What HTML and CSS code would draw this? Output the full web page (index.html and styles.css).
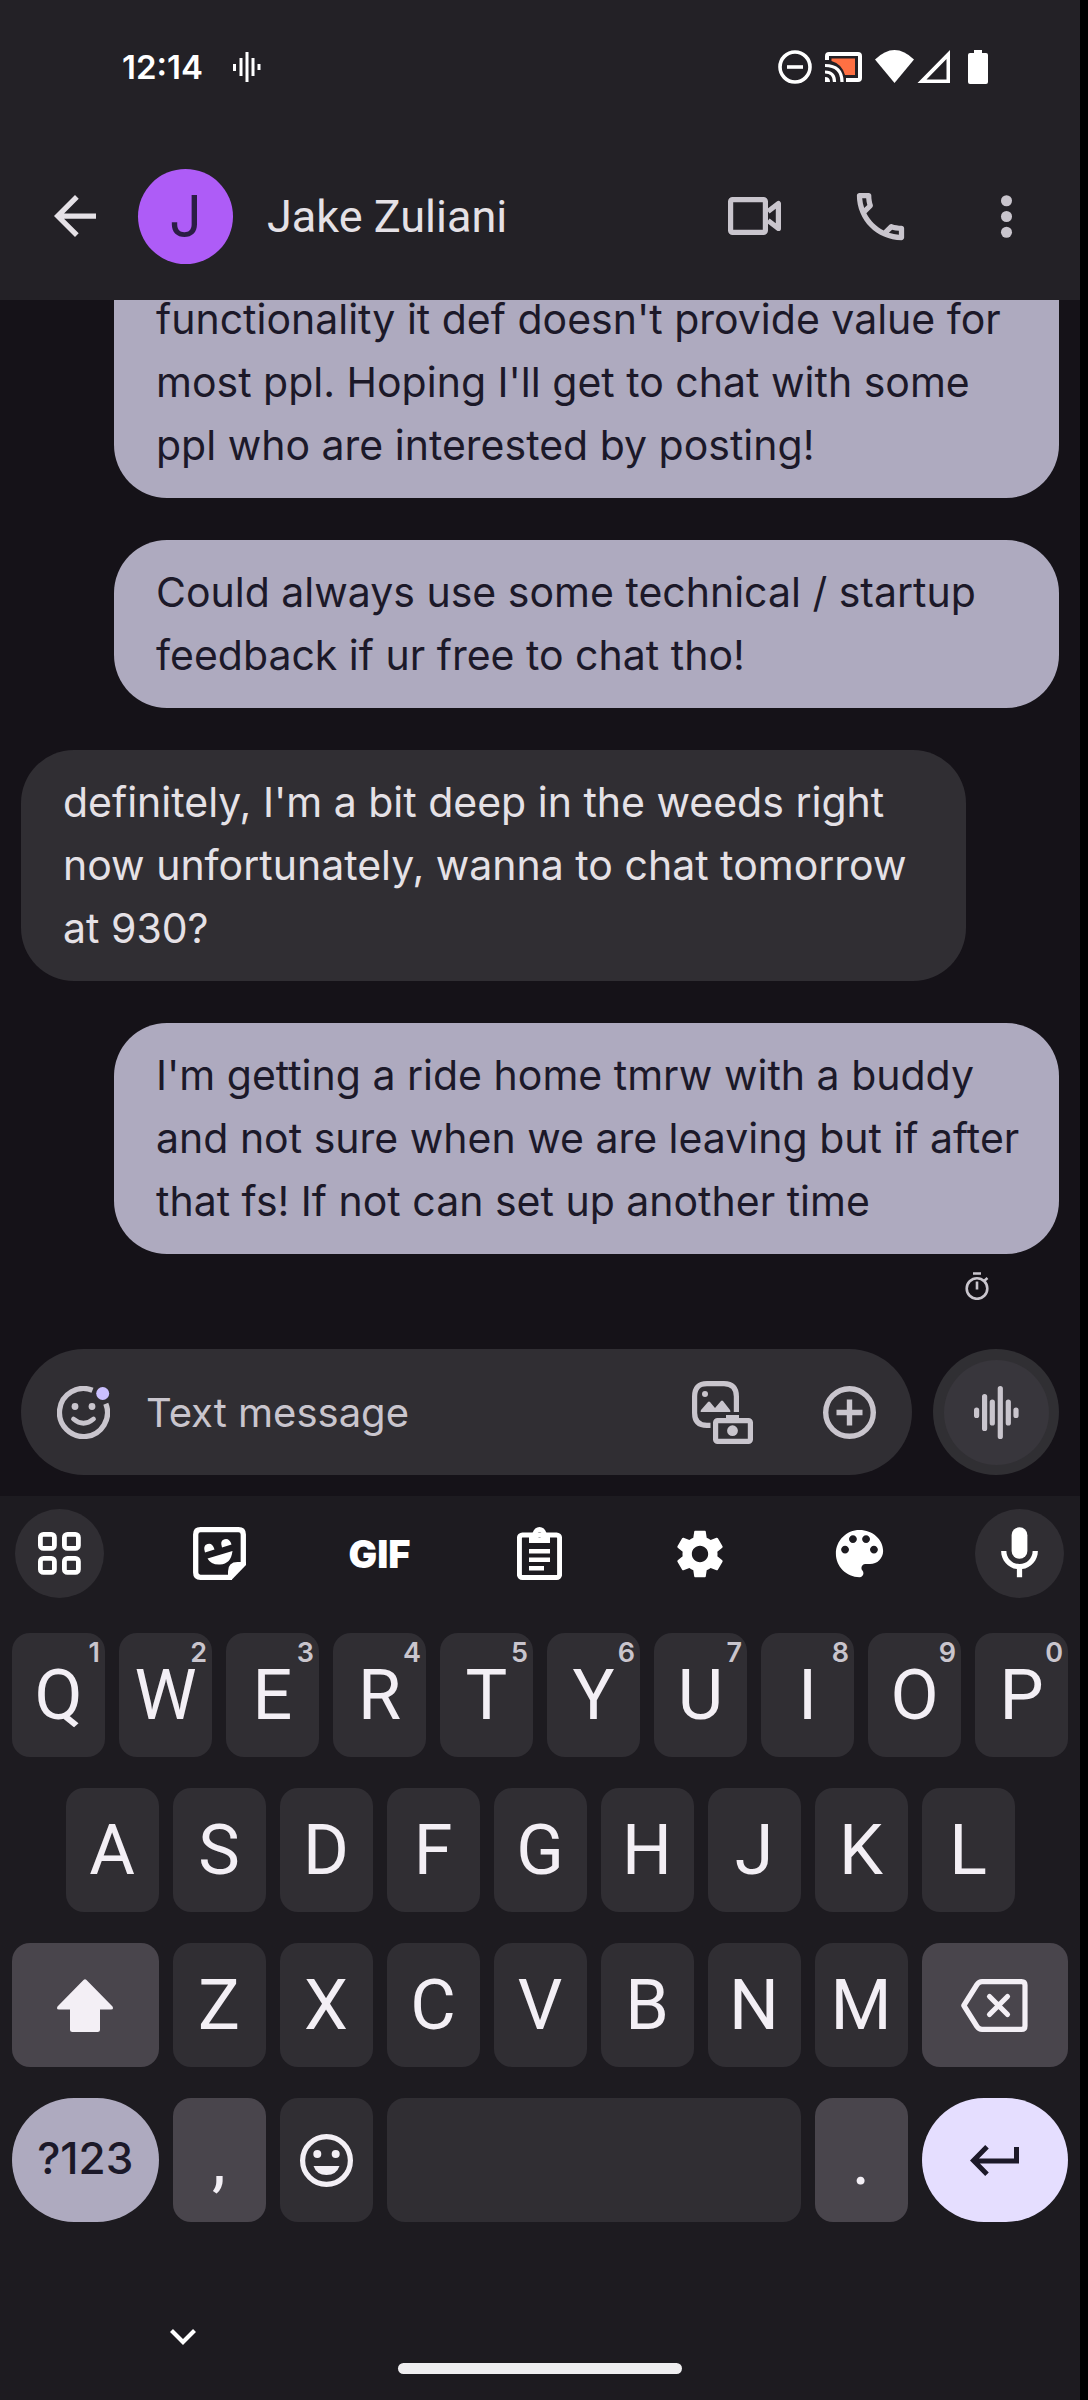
FILE: index.html
```html
<!DOCTYPE html>
<html lang="en">
<head>
<meta charset="utf-8">
<meta name="viewport" content="width=device-width, initial-scale=1">
<title>Jake Zuliani</title>
<link rel="stylesheet" href="styles.css">
</head>
<body>
<div class="app">
  <header class="top">
    <div class="status">
      <time class="clock">12:14</time>
      <svg class="wave-small" width="28" height="30" viewBox="0 0 28 30" fill="none" stroke="currentColor" stroke-width="3"><path d="M1.5 12v7M8 6v18M14 0v30M20 6v18M26 12v6"/></svg>
      <div class="status-icons">
        <svg width="34" height="34" viewBox="0 0 34 34" fill="none" stroke="currentColor"><circle cx="17" cy="17" r="15" stroke-width="3.6"/><path d="M9 17h16" stroke-width="3.6"/></svg>
        <svg width="37" height="30" viewBox="0 0 37 30" fill="none"><path d="M2 8V4q0-2 2-2h29q2 0 2 2v22q0 2-2 2H21" stroke="currentColor" stroke-width="4"/><path d="M6.500 6.500H30V23H20Q17 12 6.500 9z" fill="#ff7043"/><path d="M0 25q5 0 5 5H0z" fill="currentColor"/><path d="M0 20q9.500 0 9.500 10M0 13.500q17 0 17 16.500" stroke="currentColor" stroke-width="3.200"/></svg>
        <svg width="80" height="34" viewBox="0 0 80 34" fill="currentColor"><path d="M0 9.500Q19.500-9.500 39 9.500L19.500 33z"/><path fill-rule="evenodd" d="M42.500 33L75 0v33zM51.500 29.500H71.500V9z"/></svg>
        <svg width="20" height="34" viewBox="0 0 20 34" fill="currentColor"><path d="M6 0h8v3h4q2 0 2 2v27q0 2-2 2H2q-2 0-2-2V5q0-2 2-2h4z"/></svg>
      </div>
    </div>
    <div class="appbar">
      <button class="icon-btn" aria-label="Back"><svg width="42" height="42" viewBox="4 4 16 16" fill="currentColor"><path d="M20 11H7.830l5.590-5.590L12 4l-8 8 8 8 1.410-1.410L7.830 13H20v-2z"/></svg></button>
      <span class="avatar" aria-hidden="true">J</span>
      <h1 class="name">Jake Zuliani</h1>
      <nav class="actions">
        <button class="icon-btn action" aria-label="Video call"><svg width="53" height="38" viewBox="0 0 53 38" fill="none" stroke="currentColor" stroke-width="5.200" stroke-linejoin="round"><rect x="2.600" y="2.600" width="34.800" height="32.800" rx="2"/><path d="M40 14.500L50.400 6.500V31.500L40 23.500"/></svg></button>
        <button class="icon-btn action" aria-label="Call"><svg width="63" height="63" viewBox="0 0 24 24" fill="currentColor"><path d="M6.540 5c.060.890.210 1.760.450 2.590l-1.200 1.200c-.410-1.200-.670-2.470-.760-3.790h1.510m9.860 12.020c.850.240 1.720.390 2.600.450v1.490c-1.320-.090-2.590-.350-3.800-.750l1.200-1.190M7.500 3H4c-.550 0-1 .450-1 1 0 9.390 7.610 17 17 17 .550 0 1-.450 1-1v-3.490c0-.550-.450-1-1-1-1.240 0-2.450-.200-3.570-.570-.100-.040-.210-.050-.310-.050-.260 0-.510.100-.710.290l-2.200 2.200c-2.830-1.450-5.150-3.760-6.590-6.590l2.200-2.200c.280-.280.360-.670.250-1.020C8.700 6.450 8.500 5.250 8.500 4c0-.550-.450-1-1-1z"/></svg></button>
        <button class="icon-btn action" aria-label="More options"><svg width="63" height="63" viewBox="0 0 24 24" fill="currentColor"><circle cx="12" cy="6" r="2.100"/><circle cx="12" cy="12" r="2.100"/><circle cx="12" cy="18" r="2.100"/></svg></button>
      </nav>
    </div>
  </header>

  <main class="chat">
    <p class="bubble sent continued">functionality it def doesn't provide value for<br>most ppl. Hoping I'll get to chat with some<br>ppl who are interested by posting!</p>
    <p class="bubble sent">Could always use some technical / startup<br>feedback if ur free to chat tho!</p>
    <p class="bubble received">definitely, I'm a bit deep in the weeds right<br>now unfortunately, wanna to chat tomorrow<br>at 930?</p>
    <p class="bubble sent">I'm getting a ride home tmrw with a buddy<br>and not sure when we are leaving but if after<br>that fs! If not can set up another time</p>
    <svg class="pending" width="25" height="28" viewBox="0 0 25 28" fill="none" stroke="currentColor" stroke-width="2.600" role="img" aria-label="Sending"><circle cx="12" cy="16.500" r="10.300"/><path d="M8 1.500h8M12 9.500v8M19 9l3.500-3"/></svg>
  </main>

  <form class="composer">
    <div class="field">
      <button type="button" class="icon-btn" aria-label="Emoji"><svg width="53" height="53" viewBox="0 0 53 53" fill="none" stroke="currentColor"><path d="M35.500 4.300A24 24 0 1 0 48.800 17.700" stroke-width="5.300"/><path d="M16.500 33q10 8.500 20 0" stroke-width="4.800" stroke-linecap="round"/><g stroke="none"><circle cx="18" cy="20.500" r="3.400" fill="currentColor"/><circle cx="35" cy="20.500" r="3.400" fill="currentColor"/><circle cx="45.700" cy="7.500" r="6.500" fill="#cbc0ff"/></g></svg></button>
      <input class="message" type="text" placeholder="Text message" aria-label="Text message">
      <button type="button" class="icon-btn" aria-label="Gallery and camera"><svg width="61" height="63" viewBox="0 0 61 63" fill="none" stroke="currentColor" stroke-width="5.200"><path d="M44.400 31V15.500Q44.400 2.600 32 2.600H15Q2.600 2.600 2.600 15.500V32Q2.600 44.400 15 44.400H18.500"/><rect x="23.600" y="39.600" width="34.800" height="20.800" rx="2"/><g stroke="none" fill="currentColor"><circle cx="13" cy="13" r="3"/><path d="M9 31q-1 0 0-2l7-8q1-1 2 0l5 6 6-7q1-1 2 0l7 9q1 2 0 2z"/><path d="M34 34h13v5H34z"/><circle cx="40.500" cy="49.700" r="5.400"/></g></svg></button>
      <button type="button" class="icon-btn" aria-label="Add attachment"><svg width="53" height="53" viewBox="0 0 53 53" fill="none" stroke="currentColor" stroke-width="5.400"><circle cx="26.500" cy="26.500" r="23.800"/><path d="M13.500 26.500h26M26.500 13.500v26"/></svg></button>
    </div>
    <button type="button" class="voice" aria-label="Record voice message"><span class="voice-inner"><svg width="45" height="53" viewBox="0 0 45 53" fill="none" stroke="currentColor" stroke-width="5.200" stroke-linecap="round"><path d="M2.600 24v5.500M10.600 10.500v32M18.300 16v21M26.300 2.600v47.800M34.300 16v21M42 24v5.500"/></svg></span></button>
  </form>

  <section class="keyboard" aria-label="Keyboard">
    <div class="toolbar">
      <button class="tool round" aria-label="More tools"><svg width="43" height="43" viewBox="0 0 43 43" fill="none" stroke="currentColor" stroke-width="4.800"><rect x="2.400" y="2.400" width="14" height="14" rx="3"/><rect x="26.400" y="2.400" width="14" height="14" rx="3"/><rect x="2.400" y="26.400" width="14" height="14" rx="3"/><rect x="26.400" y="26.400" width="14" height="14" rx="3"/></svg></button>
      <button class="tool" aria-label="Stickers"><svg width="53" height="53" viewBox="0 0 53 53" fill="currentColor"><path d="M39 50.300H7.500q-4.800 0-4.800-4.800V7.500q0-4.800 4.800-4.800h38q4.800 0 4.800 4.800V38" fill="none" stroke="currentColor" stroke-width="5.300"/><path d="M35 53v-8.500Q35 35 44.500 35H53v3L38.500 53z"/><path d="M12 25.500Q9.500 18.500 14.500 17T21.500 22.500zM29 20.500Q26.500 13.500 31.500 12.200T38.500 17.500zM14.500 31.500L39.500 24Q38 37 27 37.500 18 38 14.500 31.500z"/></svg></button>
      <button class="tool gif">GIF</button>
      <button class="tool" aria-label="Clipboard"><svg width="45" height="53" viewBox="0 0 45 53" fill="currentColor"><rect x="2.400" y="8" width="40.200" height="42.500" rx="3" fill="none" stroke="currentColor" stroke-width="5"/><path fill-rule="evenodd" d="M12 16V6h3.500Q17.500 0 22.500 0T29.500 6H33v10zM22.500 5.300a2.700 2.700 0 1 0 .1 0z"/><path d="M12 22h21v4.500H12zM12 30.500h21V35H12zM12 39h15v4.500H12z"/></svg></button>
      <button class="tool" aria-label="Settings"><svg width="56" height="56" viewBox="0 0 24 24" fill="currentColor"><path d="M19.430 12.980c.040-.320.070-.640.070-.980s-.030-.660-.070-.980l2.110-1.650c.190-.150.240-.420.120-.640l-2-3.460c-.120-.220-.390-.300-.610-.220l-2.490 1c-.520-.400-1.080-.730-1.690-.980l-.380-2.650C14.460 2.180 14.250 2 14 2h-4c-.250 0-.460.180-.490.420l-.380 2.650c-.610.250-1.170.590-1.690.980l-2.490-1c-.230-.090-.490 0-.610.220l-2 3.460c-.130.220-.070.490.120.640l2.110 1.650c-.040.320-.070.650-.070.980s.030.660.070.980l-2.110 1.650c-.190.150-.240.420-.120.640l2 3.460c.120.220.390.300.610.220l2.490-1c.520.400 1.080.730 1.690.980l.380 2.650c.030.240.240.420.490.420h4c.250 0 .460-.180.490-.420l.380-2.650c.610-.250 1.170-.590 1.690-.980l2.490 1c.230.090.490 0 .610-.220l2-3.460c.120-.220.070-.490-.120-.640l-2.110-1.650zM12 15.500c-1.930 0-3.500-1.570-3.500-3.500s1.570-3.500 3.500-3.500 3.500 1.570 3.500 3.500-1.570 3.500-3.500 3.500z"/></svg></button>
      <button class="tool" aria-label="Themes"><svg width="63" height="63" viewBox="0 0 24 24" fill="currentColor"><path d="M12 3c-4.970 0-9 4.030-9 9s4.030 9 9 9c.830 0 1.500-.670 1.500-1.500 0-.390-.150-.740-.390-1.010-.230-.260-.380-.610-.380-.990 0-.830.670-1.500 1.500-1.500H16c2.760 0 5-2.240 5-5 0-4.420-4.030-8-9-8zm-5.500 9c-.830 0-1.500-.670-1.500-1.500S5.670 9 6.500 9 8 9.670 8 10.500 7.330 12 6.500 12zm3-4C8.670 8 8 7.330 8 6.500S8.670 5 9.500 5s1.500.670 1.500 1.500S10.330 8 9.500 8zm5 0c-.830 0-1.500-.670-1.500-1.500S13.670 5 14.500 5s1.500.670 1.500 1.500S15.330 8 14.500 8zm3 4c-.830 0-1.500-.670-1.500-1.500S16.670 9 17.500 9s1.500.670 1.500 1.500-.670 1.500-1.500 1.500z"/></svg></button>
      <button class="tool round" aria-label="Voice typing"><svg width="63" height="63" viewBox="0 0 24 24" fill="currentColor"><rect x="9" y="2" width="6" height="12" rx="3"/><path d="M17 11c0 2.760-2.240 5-5 5s-5-2.240-5-5H5c0 3.530 2.610 6.430 6 6.920V21h2v-3.080c3.390-.490 6-3.390 6-6.920z"/></svg></button>
    </div>
    <div class="keys">
      <button class="key">Q<sup class="hint">1</sup></button><button class="key">W<sup class="hint">2</sup></button><button class="key">E<sup class="hint">3</sup></button><button class="key">R<sup class="hint">4</sup></button><button class="key">T<sup class="hint">5</sup></button><button class="key">Y<sup class="hint">6</sup></button><button class="key">U<sup class="hint">7</sup></button><button class="key">I<sup class="hint">8</sup></button><button class="key">O<sup class="hint">9</sup></button><button class="key">P<sup class="hint">0</sup></button>
      <button class="key row-start">A</button><button class="key">S</button><button class="key">D</button><button class="key">F</button><button class="key">G</button><button class="key">H</button><button class="key">J</button><button class="key">K</button><button class="key">L</button>
      <button class="key wide alt first" aria-label="Shift"><svg width="56" height="53" viewBox="0 0 56 53" fill="currentColor"><path d="M26.500 1q1.500-1.500 3 0L55.500 27.500q1.500 3-1.500 3H43V50.500q0 2.500-2.500 2.500h-25Q13 53 13 50.500V30.500H2q-3 0-1.500-3z"/></svg></button><button class="key">Z</button><button class="key">X</button><button class="key">C</button><button class="key">V</button><button class="key">B</button><button class="key">N</button><button class="key">M</button><button class="key wide alt" aria-label="Backspace"><svg width="67" height="53" viewBox="0 0 67 53" fill="none" stroke="currentColor" stroke-width="5.200" stroke-linejoin="round" stroke-linecap="round"><path d="M2.800 26.500L16 5.500Q18 2.600 21 2.600H60.500Q64 2.600 64 6V47Q64 50.400 60.500 50.400H21Q18 50.400 16 47.500z"/><path d="M28.500 17.500l18 18M46.500 17.500l-18 18"/></svg></button>
      <button class="key wide symbols">?123</button><button class="key alt">,</button><button class="key" aria-label="Emoji"><svg width="53" height="53" viewBox="0 0 53 53" fill="currentColor"><circle cx="26.500" cy="26.500" r="23.900" fill="none" stroke="currentColor" stroke-width="5.200"/><circle cx="17.300" cy="20" r="4"/><circle cx="35.700" cy="20" r="4"/><path d="M13.500 32h26Q36.500 41 26.500 41T13.500 32z"/></svg></button><button class="key space" aria-label="Space"></button><button class="key alt">.</button><button class="key wide enter" aria-label="Enter"><svg width="49" height="31" viewBox="0 0 49 31" fill="none" stroke="currentColor" stroke-width="5"><path d="M46.500 2v14H4M17 1.800L3.500 15.500 17 29.200"/></svg></button>
    </div>
    <button class="hide-keyboard" aria-label="Hide keyboard"><svg width="26" height="16" viewBox="0 0 26 16" fill="none" stroke="currentColor" stroke-width="4.200"><path d="M1.500 1.500L13 13 24.500 1.500"/></svg></button>
    <div class="home-bar"></div>
  </section>
</div>
</body>
</html>
```
FILE: styles.css
```css
* { box-sizing: border-box; }

body {
  margin: 0;
  background: #000;
  font-family: Inter, "Liberation Sans", sans-serif;
}

button {
  margin: 0;
  padding: 0;
  border: 0;
  background: none;
  color: inherit;
  font: inherit;
}

svg { display: block; }

.app {
  display: flex;
  flex-direction: column;
  height: 100vh;
  margin-right: 8px;
  background: #151218;
  color: #e5e1e6;
}

/* Status bar and conversation header */
.top { background: #232126; }

.status {
  display: flex;
  align-items: center;
  height: 134px;
  padding: 0 92px 0 122px;
  color: #fff;
}

.clock {
  font-size: 33px;
  font-weight: 600;
}

.wave-small { margin-left: 30px; }

.status-icons {
  display: flex;
  align-items: center;
  gap: 13px;
  margin-left: auto;
}

.appbar {
  display: flex;
  align-items: center;
  height: 166px;
  padding: 0 42px 2px 54px;
}

.icon-btn {
  display: flex;
  align-items: center;
  justify-content: center;
  flex: none;
}

.avatar {
  display: flex;
  align-items: center;
  justify-content: center;
  width: 95px;
  height: 95px;
  margin: 0 34px 0 42px;
  border-radius: 50%;
  background: #ae5cf7;
  color: #2b1d45;
  font-size: 58px;
}

.name {
  flex: 1;
  margin: 0;
  font-family: Roboto, sans-serif;
  font-size: 45px;
  font-weight: 400;
}

.actions {
  display: flex;
  gap: 63px;
  color: #c9c5cd;
}

.action {
  width: 63px;
  height: 63px;
}

/* Messages, anchored to the bottom */
.chat {
  display: flex;
  flex: 1;
  flex-direction: column;
  justify-content: flex-end;
  gap: 42px;
  min-height: 0;
  overflow: hidden;
  padding: 0 21px 49px;
}

.bubble {
  flex: none;
  margin: 0;
  padding: 21px 0 21px 42px;
  border-radius: 53px;
  font-size: 41px;
  line-height: 63px;
}

.sent {
  margin-left: 93px;
  background: #aeaabf;
  color: #1c1929;
}

.continued {
  border-top-left-radius: 0;
  border-top-right-radius: 0;
}

.received {
  margin-right: 93px;
  background: #302e33;
}

.pending {
  flex: none;
  align-self: flex-end;
  margin: -24px 69px 0 0;
  color: #c9c5cd;
}

/* Composer */
.composer {
  display: flex;
  gap: 21px;
  padding: 0 21px 21px;
  color: #c9c5cd;
}

.field {
  display: flex;
  flex: 1;
  align-items: center;
  min-width: 0;
  height: 126px;
  padding: 0 36px;
  border-radius: 63px;
  background: #302e33;
}

.message {
  flex: 1;
  min-width: 0;
  margin: 0 36px;
  padding: 0;
  border: 0;
  outline: 0;
  background: none;
  color: #e5e1e6;
  font: inherit;
  font-size: 40px;
}

.message::placeholder {
  color: #c9c5cd;
  opacity: 1;
}

.message + .icon-btn { margin-right: 70px; }

.voice {
  display: flex;
  align-items: center;
  justify-content: center;
  width: 126px;
  height: 126px;
  border-radius: 50%;
  background: #302f33;
}

.voice-inner {
  display: flex;
  align-items: center;
  justify-content: center;
  width: 105px;
  height: 105px;
  border-radius: 50%;
  background: #38363c;
}

/* Keyboard */
.keyboard {
  flex: none;
  padding: 13px 12px 26px;
  background: #1d1b20;
  color: #f3eff5;
}

.toolbar {
  display: flex;
  justify-content: space-between;
  padding: 0 4px 0 3px;
  color: #fff;
}

.tool {
  display: flex;
  align-items: center;
  justify-content: center;
  width: 89px;
  height: 89px;
  border-radius: 50%;
}

.round { background: #302e33; }

.gif {
  font-size: 38px;
  font-weight: 900;
}

.keys {
  display: grid;
  grid-template-columns: repeat(20, 1fr);
  gap: 31px 14px;
  margin-top: 35px;
}

.key {
  position: relative;
  display: flex;
  grid-column: span 2;
  align-items: center;
  justify-content: center;
  height: 124px;
  border-radius: 18px;
  background: #302e33;
  font-family: Roboto, sans-serif;
  font-size: 70px;
  line-height: 120px;
}

.row-start { grid-column: 2 / span 2; }
.wide { grid-column: span 3; }
.first { grid-column: 1 / span 3; }
.space { grid-column: span 8; }
.alt { background: #49454c; }

.hint {
  position: absolute;
  top: 6px;
  right: 5px;
  color: #c9c5cd;
  font-family: Inter, sans-serif;
  font-size: 27px;
  font-weight: 600;
  line-height: 28px;
}

.symbols {
  padding-bottom: 4px;
  border-radius: 62px;
  background: #aeaabf;
  color: #1c1929;
  font-family: Inter, sans-serif;
  font-size: 44px;
  font-weight: 500;
}

.enter {
  border-radius: 62px;
  background: #e5deff;
  color: #1c1929;
}

.hide-keyboard {
  display: block;
  margin: 107px 0 18px 158px;
  color: #fff;
}

.home-bar {
  width: 284px;
  height: 11px;
  margin: 0 auto;
  border-radius: 6px;
  background: #efeef0;
}
```
